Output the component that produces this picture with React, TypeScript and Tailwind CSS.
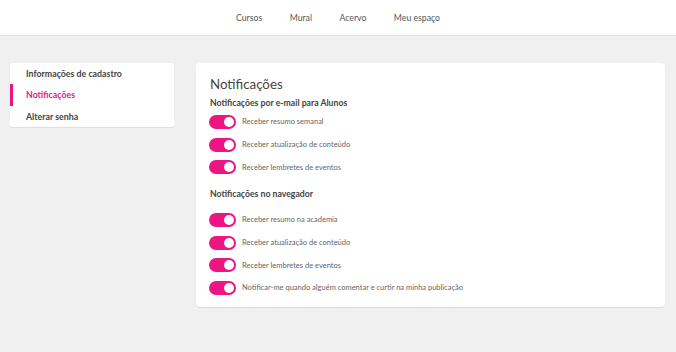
import React from "react";

const font = { fontFamily: "Lato, 'Noto Sans', sans-serif" };

function Toggle() {
  return (
    <div className="w-[27px] h-[14px] rounded-full bg-[#ec1582] flex items-center justify-end pr-[2px] shrink-0">
      <div className="w-[10px] h-[10px] rounded-full bg-white" />
    </div>
  );
}

function Row({ label }: { label: string }) {
  return (
    <div className="h-[22.7px] flex items-center gap-[6px]">
      <Toggle />
      <span className="text-[7.5px] text-[#666]">{label}</span>
    </div>
  );
}

export default function App() {
  return (
    <div className="w-[676px] h-[352px] bg-[#f0f0f0] overflow-hidden" style={font}>
      <header className="h-[36px] bg-white border-b border-[#e2e2e2] flex items-center justify-center gap-[27.5px] text-[8.7px] text-[#555]">
        <span>Cursos</span>
        <span>Mural</span>
        <span>Acervo</span>
        <span>Meu espaço</span>
      </header>
      <div className="flex items-start pt-[27px] pl-[10px] gap-[22px]">
        <div className="w-[164px] bg-white rounded-[2px] shadow-[0_1px_1px_rgba(0,0,0,0.08)] flex flex-col text-[8.8px] font-bold text-[#444]">
          <div className="h-[21px] flex items-center pl-[16px]">Informações de cadastro</div>
          <div className="h-[22px] flex items-center text-[#ec1582] border-l-[3px] border-[#ec1582] pl-[13px]">Notificações</div>
          <div className="h-[21px] flex items-center pl-[16px]">Alterar senha</div>
        </div>
        <div className="w-[469px] h-[244px] bg-white rounded-[4px] shadow-[0_1px_1px_rgba(0,0,0,0.08)] pt-[12px] px-[13px] flex flex-col">
          <div className="text-[13.3px] leading-[18px] text-[#444] pl-[1px]">Notificações</div>
          <div className="mt-[4px] text-[8.7px] leading-[12px] font-bold text-[#444] pl-[1px]">Notificações por e-mail para Alunos</div>
          <div className="mt-[1.5px] flex flex-col">
            <Row label="Receber resumo semanal" />
            <Row label="Receber atualização de conteúdo" />
            <Row label="Receber lembretes de eventos" />
          </div>
          <div className="mt-[9px] text-[8.7px] leading-[12px] font-bold text-[#444] pl-[1px]">Notificações no navegador</div>
          <div className="mt-[9px] flex flex-col">
            <Row label="Receber resumo na academia" />
            <Row label="Receber atualização de conteúdo" />
            <Row label="Receber lembretes de eventos" />
            <Row label="Notificar-me quando alguém comentar e curtir na minha publicação" />
          </div>
        </div>
      </div>
    </div>
  );
}
